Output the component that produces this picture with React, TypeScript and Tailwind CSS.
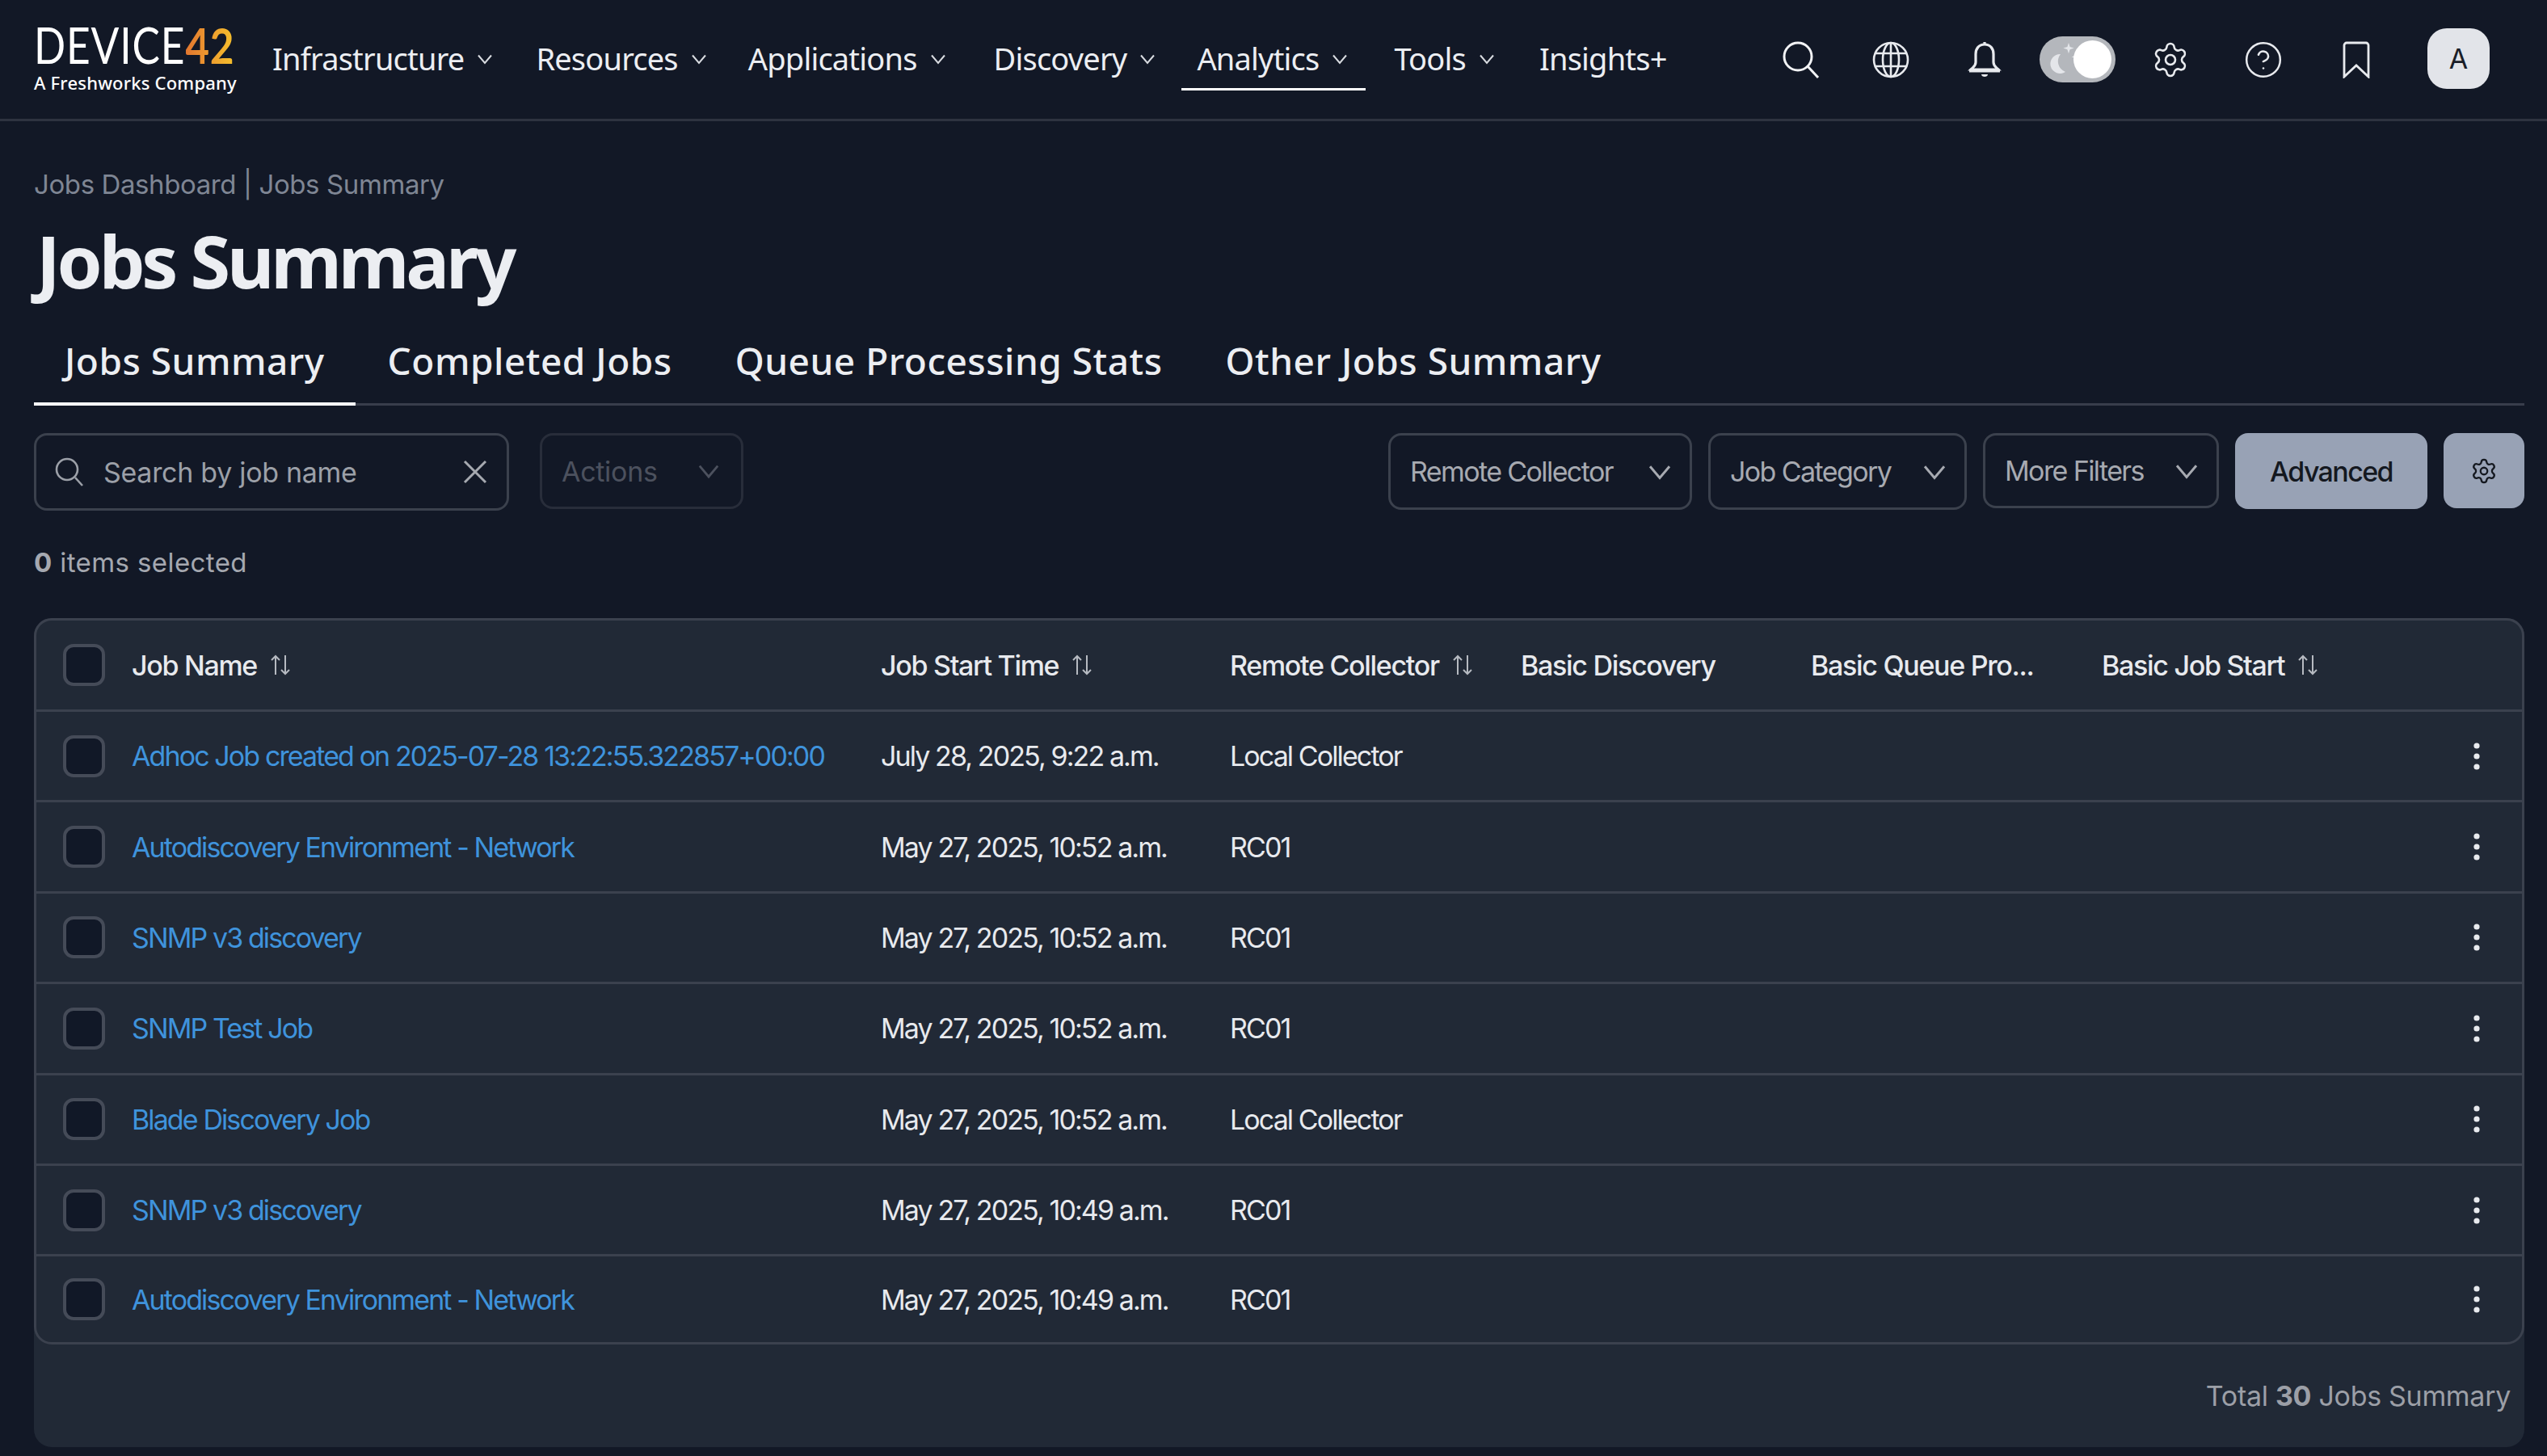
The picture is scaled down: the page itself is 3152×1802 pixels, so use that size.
import React from "react";
import { Settings, CircleHelp } from "lucide-react";

const C = ({ className = "", size = 20 }: { className?: string; size?: number }) => (
  <svg width={size} height={size} viewBox="0 0 20 20" fill="none" stroke="currentColor" strokeWidth="2" className={className}>
    <path d="M2 5.5 L10 15 L18 5.5" />
  </svg>
);

const Sort = () => (
  <svg width="26" height="26" viewBox="0 0 26 26" fill="none" stroke="#b6bac1" strokeWidth="2">
    <path d="M7 25V2M2 7l5-5 5 5" />
    <path d="M19 1v23M14 19l5 5 5-5" />
  </svg>
);

const Dots = () => (
  <svg width="10" height="34" viewBox="0 0 10 34" fill="#e8eaee">
    <circle cx="5" cy="4" r="3.6" />
    <circle cx="5" cy="17" r="3.6" />
    <circle cx="5" cy="30" r="3.6" />
  </svg>
);

const Box = () => <div className="w-[52px] h-[52px] rounded-[13px] border-[4px] border-[#454b58] bg-[#111827]" />;

const nav: [string, boolean, string][] = [
  ["Infrastructure", true, "mr-[53px]"],
  ["Resources", true, "mr-[51px]"],
  ["Applications", true, "mr-[59px]"],
  ["Discovery", true, "mr-[51px]"],
  ["Analytics", true, "mr-[57px]"],
  ["Tools", true, "mr-[55px]"],
  ["Insights+", false, ""],
];

const rows = [
  ["Adhoc Job created on 2025-07-28 13:22:55.322857+00:00", "July 28, 2025, 9:22 a.m.", "Local Collector"],
  ["Autodiscovery Environment - Network", "May 27, 2025, 10:52 a.m.", "RC01"],
  ["SNMP v3 discovery", "May 27, 2025, 10:52 a.m.", "RC01"],
  ["SNMP Test Job", "May 27, 2025, 10:52 a.m.", "RC01"],
  ["Blade Discovery Job", "May 27, 2025, 10:52 a.m.", "Local Collector"],
  ["SNMP v3 discovery", "May 27, 2025, 10:49 a.m.", "RC01"],
  ["Autodiscovery Environment - Network", "May 27, 2025, 10:49 a.m.", "RC01"],
];

const grid = "grid grid-cols-[118px_927px_432px_360px_359px_360px_1fr] items-center";
const fira = "font-['Noto_Sans',sans-serif]";

export default function App() {
  return (
    <div className="w-full min-h-[1802px] bg-[#121826] text-[#eceef2] font-['Inter',sans-serif] overflow-hidden">
      <header className={`h-[150px] border-b-[3px] border-[#2e3340] flex items-center pl-[42px] ${fira}`}>
        <div className="w-[295px] flex flex-col shrink-0">
          <div className="h-[50px] flex items-center origin-left scale-x-[0.83] font-['Lato',sans-serif] text-[62px] leading-[50px] tracking-[1px] text-white">
            <span>DEVICE</span>
            <span className="bg-gradient-to-r from-[#e2762f] to-[#f5c02c] bg-clip-text text-transparent font-bold">42</span>
          </div>
          <div className="text-[22px] leading-[30px] mt-[7px] tracking-[0.2px] text-white font-medium whitespace-nowrap">A Freshworks Company</div>
        </div>
        <nav className="flex items-center text-[38px] tracking-[-0.8px] h-[150px] pb-[2px]">
          {nav.map(([n, ch, m]) => (
            <div key={n} className={`relative flex items-center gap-[16px] whitespace-nowrap ${m}`}>
              <span>{n}</span>
              {ch && <C size={20} className="text-[#d8dbe0]" />}
              {n === "Analytics" && <div className="absolute left-[-19px] right-[-22px] top-[65px] h-[3px] bg-white" />}
            </div>
          ))}
        </nav>
        <div className="ml-auto flex items-center pr-[71px]">
          <svg width="46" height="46" viewBox="0 0 46 46" fill="none" stroke="#f2f3f5" strokeWidth="3" className="mr-[65px]">
            <circle cx="19" cy="19" r="17" />
            <path d="M31 31l13 14" />
          </svg>
          <svg width="46" height="46" viewBox="0 0 46 46" fill="none" stroke="#e8eaee" strokeWidth="2.6" className="mr-[72px]">
            <circle cx="23" cy="23" r="21" />
            <ellipse cx="23" cy="23" rx="10" ry="21" />
            <path d="M23 2v42M4 15h38M4 31h38" />
          </svg>
          <svg width="42" height="46" viewBox="0 0 42 46" fill="none" stroke="#e8eaee" strokeWidth="3.2" className="mr-[47px]">
            <path d="M21 4c-7 0-11 5-11 12v10c0 5-3 6-6 9h34c-3-3-6-4-6-9V16c0-7-4-12-11-12z" />
            <path d="M2 37h38" />
            <path d="M17 41h8c0 4-8 4-8 0z" fill="#e8eaee" stroke="none" />
            <path d="M21 1v3" />
          </svg>
          <div className="relative w-[94px] h-[57px] rounded-full bg-[#b4b7bc] mr-[44px]">
            <svg width="40" height="44" viewBox="0 0 40 44" className="absolute left-[10px] top-[6px]" fill="#e4e6ea">
              <path d="M16 16a12 12 0 1 0 6 22a14 14 0 0 1-6-22z" />
              <path d="M26 2l1.6 5 5 1.6-5 1.6-1.6 5-1.6-5-5-1.6 5-1.6zM35 14l1.4 4 4 1.4-4 1.4-1.4 4-1.4-4-4-1.4 4-1.4z" />
            </svg>
            <div className="absolute right-[5px] top-[5px] w-[47px] h-[47px] rounded-full bg-white" />
          </div>
          <Settings size={48} strokeWidth={1.3} className="text-[#e8eaee] mr-[66px]" />
          <CircleHelp size={50} strokeWidth={1.2} className="text-[#e8eaee] mr-[73px]" />
          <svg width="34" height="46" viewBox="0 0 34 46" fill="none" stroke="#e8eaee" strokeWidth="2.8" className="mr-[71px]">
            <path d="M2 44V5a3 3 0 0 1 3-3h24a3 3 0 0 1 3 3v39L17 30z" />
          </svg>
          <div className={`mb-[3px] w-[77px] h-[75px] rounded-[24px] bg-[#e2e4e9] flex items-center justify-center text-[#1a1e28] text-[34px] font-['Inter',sans-serif]`}>A</div>
        </div>
      </header>

      <main className="pl-[42px] pr-[28px]">
        <div className="mt-[58px] h-[40px] leading-[40px] text-[33px] tracking-[-0.4px] text-[#7f8694]">Jobs Dashboard | Jobs Summary</div>
        <h1 className={`mt-[24px] mb-[6px] pl-[3px] h-[100px] leading-[100px] text-[90px] font-bold text-[#eceef2] tracking-[-4.2px] ${fira}`}>Jobs Summary</h1>
        <div className={`h-[124px] border-b-[3px] border-[#383d4b] flex gap-[2px] ${fira}`}>
          {["Jobs Summary", "Completed Jobs", "Queue Processing Stats", "Other Jobs Summary"].map((t, i) => (
            <div key={t} className={`h-[124px] pt-[16px] px-[38px] flex items-center text-[46px] tracking-[0.5px] font-medium whitespace-nowrap border-b-[4px] ${i === 0 ? "border-white" : "border-transparent"}`}>{t}</div>
          ))}
        </div>

        <div className="mt-[34px] h-[96px] flex items-start text-[34px]">
          <div className="w-[588px] h-[96px] rounded-[16px] border-[3px] border-[#3b414d] flex items-center pl-[21px] pr-[24px] text-[#9ca0a8]">
            <svg width="40" height="40" viewBox="0 0 40 40" fill="none" stroke="#9ca0a8" strokeWidth="2.6" className="mr-[22px]">
              <circle cx="17" cy="17" r="13" />
              <path d="M27 27l9 10" />
            </svg>
            <span className="tracking-[-0.3px]">Search by job name</span>
            <svg width="30" height="30" viewBox="0 0 30 30" stroke="#a6a9b0" strokeWidth="3" className="ml-auto">
              <path d="M2 2l26 26M28 2L2 28" />
            </svg>
          </div>
          <div className="ml-[38px] w-[252px] h-[94px] rounded-[16px] border-[3px] border-[#282d3a] flex items-center pl-[24px] pr-[26px] text-[#4c515e]">
            <span className="tracking-[-0.3px]">Actions</span>
            <C size={28} className="ml-auto" />
          </div>
          <div className="ml-auto flex items-start gap-[20px] text-[#a7aab1] tracking-[-1.6px]">
            {[["Remote Collector", "w-[376px] h-[95px]"], ["Job Category", "w-[320px] h-[95px]"], ["More Filters", "w-[292px] h-[93px]"]].map(([t, w]) => (
              <div key={t} className={`${w} rounded-[16px] border-[3px] border-[#3b414d] flex items-center pl-[24px] pr-[22px]`}>
                <span>{t}</span>
                <C size={30} className="ml-auto" />
              </div>
            ))}
            <div className="w-[238px] h-[94px] rounded-[16px] bg-[#98a2b5] flex items-center justify-center text-[#14181f] font-medium">Advanced</div>
            <div className="w-[100px] h-[93px] rounded-[16px] bg-[#98a2b5] flex items-center justify-center">
              <Settings size={34} strokeWidth={1.6} className="text-[#14181f]" />
            </div>
          </div>
        </div>

        <div className="mt-[44px] h-[40px] leading-[40px] text-[33px] tracking-[0.4px] text-[#a5a8b0]"><b className="font-bold text-[#a5a8b0]">0</b> items selected</div>

        <section className="mt-[49px] h-[1026px] bg-[#212936] rounded-[22px] flex flex-col">
          <div className="rounded-[22px] border-[3px] border-[#3b414e]">
            <div className={`${grid} h-[113px] border-b-[3px] border-[#3b414e] font-medium text-[#e8eaee] text-[34px] tracking-[-1.3px]`}>
              <div className="pl-[33px]"><Box /></div>
              <div className="flex items-center gap-[16px]"><span>Job Name</span><Sort /></div>
              <div className="flex items-center gap-[16px]"><span>Job Start Time</span><Sort /></div>
              <div className="flex items-center gap-[16px]"><span>Remote Collector</span><Sort /></div>
              <div>Basic Discovery</div>
              <div>Basic Queue Pro...</div>
              <div className="flex items-center gap-[16px]"><span>Basic Job Start</span><Sort /></div>
            </div>
            {rows.map((r, i) => (
              <div key={i} className={`${grid} ${i < rows.length - 1 ? "h-[112.4px] border-b-[3px] border-[#3b414e]" : "h-[106px]"} text-[34px] tracking-[-1.9px]`}>
                <div className="pl-[33px]"><Box /></div>
                <div className="text-[#3f93dc] whitespace-nowrap">{r[0]}</div>
                <div className="text-[#e8eaee] whitespace-nowrap">{r[1]}</div>
                <div className="text-[#e8eaee] whitespace-nowrap">{r[2]}</div>
                <div />
                <div />
                <div className="justify-self-end pr-[51px] flex"><Dots /></div>
              </div>
            ))}
          </div>
          <div className="flex-1 pr-[17px] flex items-center justify-end text-[34px] tracking-[-0.3px] text-[#9c9fa7]">
            <span>Total <b className="font-bold">30</b> Jobs Summary</span>
          </div>
        </section>
      </main>
    </div>
  );
}
